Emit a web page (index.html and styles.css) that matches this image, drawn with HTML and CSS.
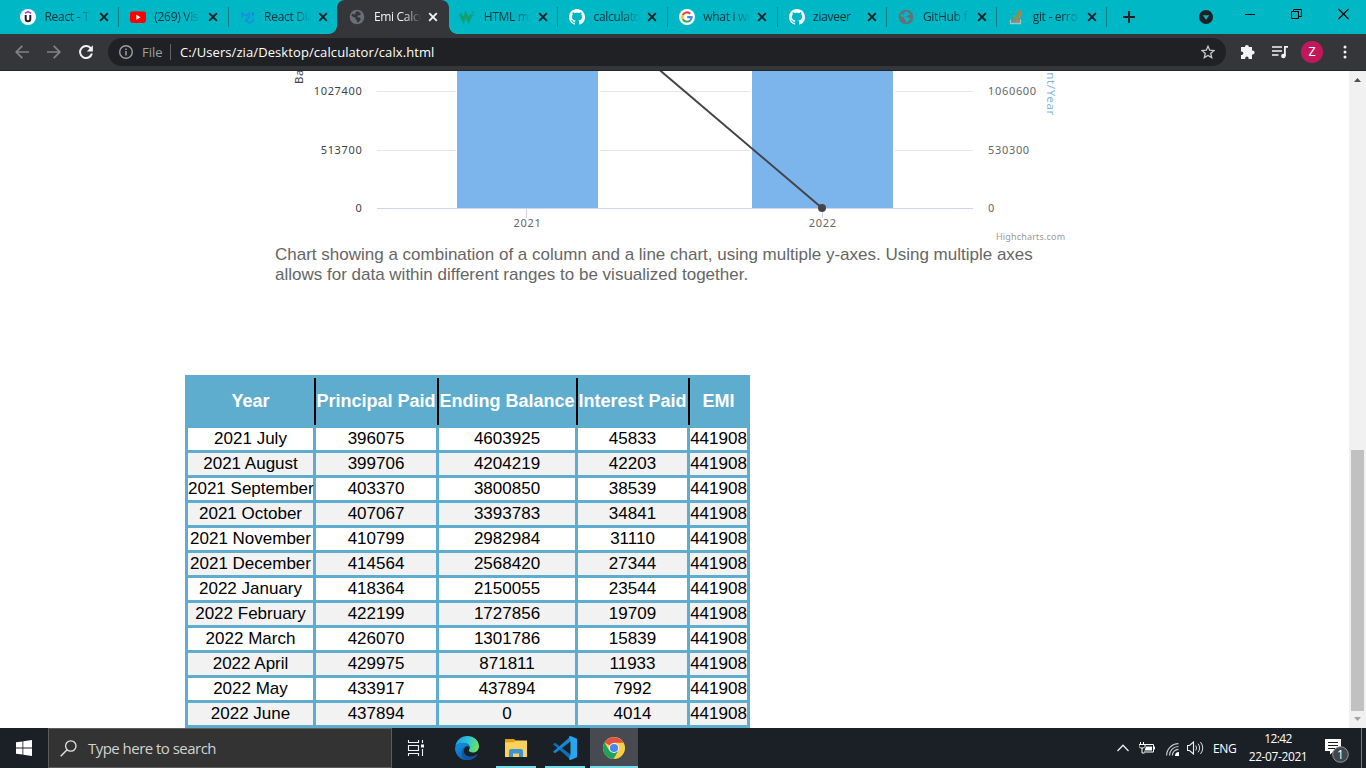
FILE: index.html
```html
<!DOCTYPE html>
<html lang="en">
<head>
<meta charset="utf-8">
<title>Emi Calculator</title>
<link rel="stylesheet" href="styles.css">
</head>
<body>
<svg width="0" height="0" class="defs">
  <defs>
    <symbol id="x" viewBox="0 0 12 12"><path d="M2.2 2.2l7.6 7.6M9.8 2.2l-7.6 7.6" stroke="currentColor" stroke-width="1.9" fill="none"/></symbol>
    <symbol id="github" viewBox="0 0 16 16"><path fill="#fff" d="M8 0C3.58 0 0 3.58 0 8c0 3.54 2.29 6.53 5.47 7.59.4.07.55-.17.55-.38 0-.19-.01-.82-.01-1.49-2.01.37-2.53-.49-2.69-.94-.09-.23-.48-.94-.82-1.13-.28-.15-.68-.52-.01-.53.63-.01 1.08.58 1.23.82.72 1.21 1.87.87 2.33.66.07-.52.28-.87.51-1.07-1.78-.2-3.64-.89-3.64-3.95 0-.87.31-1.59.82-2.15-.08-.2-.36-1.02.08-2.12 0 0 .67-.21 2.2.82.64-.18 1.32-.27 2-.27s1.36.09 2 .27c1.53-1.04 2.2-.82 2.2-.82.44 1.1.16 1.92.08 2.12.51.56.82 1.27.82 2.15 0 3.07-1.87 3.75-3.65 3.95.29.25.54.73.54 1.48 0 1.07-.01 1.93-.01 2.2 0 .21.15.46.55.38A8.01 8.01 0 0 0 16 8c0-4.42-3.58-8-8-8z"/></symbol>
    <symbol id="globe" viewBox="0 0 16 16"><circle cx="8" cy="8" r="7.3" fill="#6b6e73"/><path d="M7.5 2.2L10 2.8l2 2.3-1.2 1.2-2.1.2-.4 1.6 2.4.3 1.2 1.6-1.4 2.2-2.3 1.6-.3-2.4-1.6-1.5.3-1.2-2.4-.6L2.4 6.400l.9-2L5 5.500l1.600-.4-.4-1.300z" fill="var(--land)"/></symbol>
  </defs>
</svg>

<header class="tabs">
  <div class="tab"><svg class="fav" viewBox="0 0 16 16"><circle cx="8" cy="8" r="8" fill="#fff"/><path d="M4.900 4.300L8 2.500 11.100 4.300" fill="none" stroke="#a435f0" stroke-width="1.500"/><path d="M5.700 6v4c0 3 4.600 3 4.600 0V6" fill="none" stroke="#222" stroke-width="2"/></svg><span class="label">React - T</span><svg class="close"><use href="#x"/></svg></div>
  <div class="tab"><svg class="fav" viewBox="0 0 16 16"><rect y="2.500" width="16" height="11.500" rx="2.400" fill="#f00"/><path d="M6.300 5.700v5L10.600 8.200z" fill="#fff"/></svg><span class="label">(269) Vis</span><svg class="close"><use href="#x"/></svg></div>
  <div class="tab before"><svg class="fav" viewBox="0 0 16 16"><path d="M2.200 8.500V4.300L6 6.500l3.500-2.200v4L6.200 10.300v1.700l3.300 1.800 3.500-2V9.300" fill="none" stroke="#1593dc" stroke-width="2"/><path d="M13 3.500v3" stroke="#078bd1" stroke-width="2.200" fill="none"/></svg><span class="label">React Dia</span><svg class="close"><use href="#x"/></svg></div>
  <div class="tab active"><svg class="fav"><use href="#globe"/></svg><span class="label">Emi Calcu</span><svg class="close"><use href="#x"/></svg></div>
  <div class="tab"><svg class="fav" viewBox="0 0 16 16"><path d="M1.200 4.500L4.300 11.500 6.800 5l2.800 6.500L12.200 5.500" fill="none" stroke="#12a070" stroke-width="2.900"/><path d="M12.500 2.800H15L13.700 4.400q1.500.1 1 1.400-.8.9-2.200.3" fill="none" stroke="#12a070"/></svg><span class="label">HTML m</span><svg class="close"><use href="#x"/></svg></div>
  <div class="tab"><svg class="fav"><use href="#github"/></svg><span class="label">calculato</span><svg class="close"><use href="#x"/></svg></div>
  <div class="tab"><svg class="fav" viewBox="0 0 16 16"><circle cx="8" cy="8" r="8" fill="#fff"/><g fill="none" stroke-width="2.100"><path d="M11.200 4.700A4.700 4.700 0 0 0 3.800 6" stroke="#ea4335"/><path d="M3.800 6a4.700 4.700 0 0 0 0 4.100" stroke="#fbbc05"/><path d="M3.800 10.100a4.700 4.700 0 0 0 7.300 1.400" stroke="#34a853"/><path d="M11.100 11.500A4.400 4.400 0 0 0 12.600 8.100H8.200" stroke="#4285f4"/></g></svg><span class="label">what i wo</span><svg class="close"><use href="#x"/></svg></div>
  <div class="tab"><svg class="fav"><use href="#github"/></svg><span class="label whole">ziaveer</span><svg class="close"><use href="#x"/></svg></div>
  <div class="tab"><svg class="fav"><use href="#globe"/></svg><span class="label">GitHub f</span><svg class="close"><use href="#x"/></svg></div>
  <div class="tab"><svg class="fav" viewBox="0 0 16 16"><path d="M2.500 10.500v4h10v-4" fill="none" stroke="#bcbbbb" stroke-width="1.300"/><path d="M4.300 12.500h6.500M4.600 10l6.200 1.200M5.400 7.300l5.800 2.700M7 4.500l4.900 4.100M9.300 2.300l3.500 5.200M12.200 1.500l1.200 5" stroke="#e07a1c" stroke-width="1.200"/></svg><span class="label">git - erro</span><svg class="close"><use href="#x"/></svg></div>
  <svg class="newtab" viewBox="0 0 12 12"><path d="M6 0v12M0 6h12" stroke="#202124" stroke-width="2"/></svg>
  <div class="controls">
    <svg width="14" height="14" viewBox="0 0 14 14"><circle cx="7" cy="7" r="7" fill="#202124"/><path d="M3.800 5.200h6.400L7 9.800z" fill="#00b7c6"/></svg>
    <svg class="win" width="10" height="12" viewBox="0 0 10 12"><path d="M0 6.500h10" stroke="#000"/></svg>
    <svg class="win" width="11" height="12" viewBox="0 0 11 12"><path d="M.5 3.500h7v7h-7zM2.500 3V1.500h8v7H8" fill="none" stroke="#000"/></svg>
    <svg class="win" width="11" height="12" viewBox="0 0 11 12"><path d="M.5 1l10 10M10.500 1l-10 10" stroke="#000" stroke-width="1.100"/></svg>
  </div>
</header>

<nav class="toolbar">
  <div class="nav">
    <svg width="14" height="14" viewBox="0 0 14 14"><path d="M14 7H1.500M7.300.8L1.200 7l6.100 6.200" fill="none" stroke="#818387" stroke-width="1.700"/></svg>
    <svg width="14" height="14" viewBox="0 0 14 14"><path d="M0 7h12.500M6.700.8L12.800 7l-6.100 6.200" fill="none" stroke="#818387" stroke-width="1.700"/></svg>
    <svg width="14" height="14" viewBox="0 0 14 14"><path d="M12 3.600A6 6 0 1 0 12.900 8.500" fill="none" stroke="#f1f3f4" stroke-width="2"/><path d="M13.900.3v6.100H7.800z" fill="#f1f3f4"/></svg>
  </div>
  <div class="omnibox">
    <svg width="14" height="14" viewBox="0 0 14 14"><circle cx="7" cy="7" r="6.300" fill="none" stroke="#9aa0a6" stroke-width="1.400"/><path d="M7 6v4.500M7 3.400v1.500" stroke="#9aa0a6" stroke-width="1.500"/></svg>
    <span class="scheme">File</span><span class="url">C:/Users/zia/Desktop/calculator/calx.html</span>
    <svg class="star" width="14" height="14" viewBox="0 0 14 14"><path d="M7 1.200l1.700 4 4.300.4-3.300 2.800 1 4.200L7 10.400l-3.700 2.200 1-4.200L1 5.600l4.300-.4z" fill="none" stroke="#c6c9cc" stroke-width="1.300"/></svg>
  </div>
  <div class="actions">
    <svg width="15" height="15" viewBox="0 0 15 15"><path d="M5 3h-.1a2 2 0 0 1 4 0H12v3.500h.6a2 2 0 0 1 0 4H12V15H8.600v-.7a1.700 1.700 0 0 0-3.400 0v.7H1v-4h.6a1.700 1.700 0 0 0 0-3.500H1V3z" fill="#f1f3f4"/></svg>
    <svg width="17" height="14" viewBox="0 0 17 14"><path d="M0 2h10M0 6h10M0 10h6.500" stroke="#f1f3f4" stroke-width="1.600"/><path d="M12.900 11V1.800H16" fill="none" stroke="#f1f3f4" stroke-width="1.800"/><circle cx="11.400" cy="11" r="2.300" fill="#f1f3f4"/></svg>
    <span class="avatar">Z</span>
    <svg width="4" height="14" viewBox="0 0 4 14"><g fill="#f1f3f4"><circle cx="2" cy="2" r="1.500"/><circle cx="2" cy="7" r="1.500"/><circle cx="2" cy="12" r="1.500"/></g></svg>
  </div>
</nav>

<div class="viewport">
  <main class="page">
    <figure class="figure">
      <svg class="chart" width="800" height="173" viewBox="275 71 800 173">
        <path d="M377 91.500H456M600 91.500H750.500M895 91.500H973M377 150.500H456M600 150.500H750.500M895 150.500H973" stroke="#e6e6e6"/>
        <rect x="457" y="71" width="141" height="137" fill="#7cb5ec"/>
        <rect x="752" y="71" width="141" height="137" fill="#7cb5ec"/>
        <path d="M377 208.500H973M526.500 208v10M822.500 208v10" stroke="#ccd6eb" fill="none"/>
        <path d="M659 69.500L822 208" stroke="#434348" stroke-width="2"/>
        <circle cx="822" cy="208" r="4" fill="#434348"/>
        <g class="axis dark" text-anchor="end"><text x="362.500" y="95">1027400</text><text x="362.500" y="154">513700</text><text x="362.500" y="212">0</text></g>
        <g class="axis"><text x="988" y="95">1060600</text><text x="988" y="154">530300</text><text x="988" y="212">0</text></g>
        <g class="axis" text-anchor="middle"><text x="527.500" y="227">2021</text><text x="822.800" y="227">2022</text></g>
        <text class="title dark" transform="translate(303 84) rotate(-90)">Ba</text>
        <text class="title blue" text-anchor="end" transform="translate(1047 116) rotate(90)">nt/Year</text>
        <text class="credit" x="996" y="240">Highcharts.com</text>
      </svg>
      <figcaption class="caption">Chart showing a combination of a column and a line chart, using multiple y-axes. Using multiple axes<br>allows for data within different ranges to be visualized together.</figcaption>
    </figure>
    <table class="schedule">
      <colgroup><col class="c1"><col class="c2"><col class="c3"><col class="c4"><col class="c5"></colgroup>
      <thead><tr><th>Year</th><th>Principal Paid</th><th>Ending Balance</th><th>Interest Paid</th><th>EMI</th></tr></thead>
      <tbody>
        <tr><td>2021 July</td><td>396075</td><td>4603925</td><td>45833</td><td>441908</td></tr>
        <tr><td>2021 August</td><td>399706</td><td>4204219</td><td>42203</td><td>441908</td></tr>
        <tr><td>2021 September</td><td>403370</td><td>3800850</td><td>38539</td><td>441908</td></tr>
        <tr><td>2021 October</td><td>407067</td><td>3393783</td><td>34841</td><td>441908</td></tr>
        <tr><td>2021 November</td><td>410799</td><td>2982984</td><td>31110</td><td>441908</td></tr>
        <tr><td>2021 December</td><td>414564</td><td>2568420</td><td>27344</td><td>441908</td></tr>
        <tr><td>2022 January</td><td>418364</td><td>2150055</td><td>23544</td><td>441908</td></tr>
        <tr><td>2022 February</td><td>422199</td><td>1727856</td><td>19709</td><td>441908</td></tr>
        <tr><td>2022 March</td><td>426070</td><td>1301786</td><td>15839</td><td>441908</td></tr>
        <tr><td>2022 April</td><td>429975</td><td>871811</td><td>11933</td><td>441908</td></tr>
        <tr><td>2022 May</td><td>433917</td><td>437894</td><td>7992</td><td>441908</td></tr>
        <tr><td>2022 June</td><td>437894</td><td>0</td><td>4014</td><td>441908</td></tr>
      </tbody>
    </table>
  </main>
  <aside class="scrollbar">
    <svg width="17" height="17" viewBox="0 0 17 17"><path d="M5 11h7L8.500 7z" fill="#505050"/></svg>
    <div class="thumb"></div>
    <svg width="17" height="17" viewBox="0 0 17 17"><path d="M5 6h7L8.500 10z" fill="#a3a3a3"/></svg>
  </aside>
</div>

<footer class="taskbar">
  <div class="start"><svg width="16" height="16" viewBox="0 0 16 16"><path d="M0 2.300L6.500 1.400V7.600H0zM7.300 1.200L16 0v7.600H7.300zM0 8.400h6.500v6.200L0 13.700zM7.300 8.400H16V16l-8.700-1.200z" fill="#fff"/></svg></div>
  <div class="search"><svg width="17" height="17" viewBox="0 0 17 17"><circle cx="10.800" cy="6" r="5.200" fill="none" stroke="#e4e4e4" stroke-width="1.300"/><path d="M7.100 9.700L.7 16.200" stroke="#e4e4e4" stroke-width="1.400"/></svg><span>Type here to search</span></div>
  <div class="apps">
    <div class="app taskview"><svg width="18" height="16" viewBox="0 0 18 16"><path d="M1.500 0v2.500h10V0M1.500 16v-2.500h10V16M1.500 5.500h10v5h-10zM15.500 0v3M15.500 9v7" fill="none" stroke="#f2f2f2" stroke-width="1.100"/><path d="M14 4.500h3v3h-3z" fill="#fff"/></svg></div>
    <div class="app edge"><svg width="24" height="24" viewBox="0 0 24 24">
      <defs><linearGradient id="ea" x1="0" y1=".3" x2="1" y2=".5"><stop stop-color="#1b9fe4"/><stop offset=".5" stop-color="#2cc3d8"/><stop offset="1" stop-color="#6be45b"/></linearGradient><linearGradient id="eb" x1="0" y1="0" x2=".6" y2="1"><stop stop-color="#1596e0"/><stop offset="1" stop-color="#0762b9"/></linearGradient></defs>
      <path d="M.3 10.500C1.200 4.300 6 0 12.300 0 19 0 24 4.700 24 10.200c0 3.600-2.500 6.300-6 6.300-2.800 0-4.200-1.200-4.200-2 0-.7.900-1.200.9-3C14.700 9 12 7 8.500 7 4 7 1.200 9 .3 10.500z" fill="url(#ea)"/>
      <path d="M.2 11C1.500 8.300 5 6.700 8.500 6.700c3.500 0 6.200 2.100 6.200 4.400-2.300-2.200-6.500.2-6 4.500.4 3.800 3.500 6.800 7.300 8A12 12 0 0 1 0 12z" fill="url(#eb)"/>
      <path d="M10.700 10.400c-3.800 3-2 9.500 4.300 10 3.500.2 5.300-1 7-2.100.4-.2.700.1.400.6-2.200 3.400-5.600 5.100-9.500 5.100-4.800-.8-6.500-4.700-6-8 .3-2.600 1.500-4.700 3.800-5.600z" fill="#15539e"/>
    </svg></div>
    <div class="app running explorer"><svg width="22" height="18" viewBox="0 0 22 18"><path d="M0 0h8.500l2 1.500H22V18H0z" fill="#fbd15b"/><path d="M0 0h8.500l2 1.500-1.500 1.700H0z" fill="#e3a008"/><path d="M4 18v-6.500L5.500 10h11l1.500 1.500V18h-4v-3.500H8V18z" fill="#3b92d4"/></svg></div>
    <div class="app running"><svg width="24" height="24" viewBox="0 0 24 24"><path d="M0 8.300L2 6.700 17.500 18.500v5z" fill="#0a70bd"/><path d="M0 15.700l2 1.600L17.500 5.500v-5z" fill="#1687cf"/><path d="M17.500 0L24 2.700v18.600L17.500 24l-1.700-.8 1.700-5V5.800L15.800.8z" fill="#27a5ee"/></svg></div>
    <div class="app running current"><svg width="22" height="22" viewBox="0 0 22 22"><circle cx="11" cy="11" r="11" fill="#fdce45"/><path d="M11 11L1.500 5.500A11 11 0 0 1 20.500 5.800H11z" fill="#df5045"/><path d="M1.500 5.500A11 11 0 0 0 10.500 22l5-8.500L11 11 6.400 13.800z" fill="#1ca15f"/><circle cx="11" cy="11" r="5.100" fill="#f5f5f5"/><circle cx="11" cy="11" r="4.100" fill="#4688f1"/></svg></div>
  </div>
  <div class="tray">
    <svg width="12" height="8" viewBox="0 0 12 8"><path d="M.5 7L6 1.300 11.500 7" fill="none" stroke="#eee" stroke-width="1.300"/></svg>
    <svg class="battery" width="16" height="12" viewBox="0 0 16 12"><path d="M5 2.500h9.500v7.500H5M15.500 4.500v3" fill="none" stroke="#fff"/><path d="M7 4.500h6v4H5.500z" fill="#fff"/><path d="M1.500 0v2.500M4.500 0v2.500M0 2.500h6v2L4.500 6h-3L0 4.500zM3 6v5h2.500" fill="none" stroke="#fff"/></svg>
    <svg class="wifi" width="13" height="13" viewBox="0 0 13 13"><g fill="none" stroke="#c9c9c9" stroke-width="1.200"><path d="M.6 12.500A12 12 0 0 1 12.500.6M3.500 12.500a9 9 0 0 1 9-9M6.400 12.500a6 6 0 0 1 6.100-6.100"/></g><path d="M9 13a4 4 0 0 1 4-4v4z" fill="#fff"/></svg>
    <svg class="volume" width="17" height="14" viewBox="0 0 17 14"><path d="M.5 4.500h2L6.500 1v12l-4-3.500h-2z" fill="none" stroke="#eee" stroke-width="1.100"/><path d="M8.700 4.500q1.800 2.500 0 5M11 2.700q3.300 4.300 0 8.600M13.500 1q4.500 6 0 12" fill="none" stroke="#ddd"/></svg>
    <span class="lang">ENG</span>
    <div class="clock"><span>12:42</span><span class="date">22-07-2021</span></div>
    <div class="notice"><svg width="24" height="26" viewBox="0 0 24 26"><path d="M0 1h16v12H9l-4 3.500V13H0z" fill="#fff"/><path d="M3 4.500h10M3 7.500h10M3 10.500h7" stroke="#1b1e24"/><circle cx="15.500" cy="16.500" r="7.800" fill="#44474a" stroke="#96989a"/><text x="15.500" y="21" text-anchor="middle">1</text></svg></div>
    <div class="peek"></div>
  </div>
</footer>
</body>
</html>
```
FILE: styles.css
```css
* { box-sizing: border-box; }
html, body { margin: 0; height: 100%; overflow: hidden; }
body { display: flex; flex-direction: column; width: 1366px; height: 768px; background: #fff; font-family: "Open Sans", "Noto Sans", sans-serif; }
svg { display: block; flex: none; }
.defs { display: none; }

.tabs { display: flex; height: 34px; padding-left: 9px; background: #00b7c6; flex: none; --land: #00b7c6; }
.tab { position: relative; display: flex; align-items: center; width: 109.8px; height: 34px; padding-left: 11px; flex: none; color: #12343a; }
.tab::after { content: ""; position: absolute; right: 0; top: 7px; width: 1px; height: 20px; background: #147c86; }
.tab.before::after { display: none; }
.fav { width: 16px; height: 16px; }
.label { width: 48px; margin-left: 8.5px; white-space: nowrap; font-size: 12px; letter-spacing: -0.3px; line-height: 18px; -webkit-mask-image: linear-gradient(90deg, #000 62%, transparent 98%); mask-image: linear-gradient(90deg, #000 62%, transparent 98%); }
.label.whole { -webkit-mask-image: none; mask-image: none; }
.close { width: 12px; height: 12px; margin-left: 5px; color: #202124; }
.tab.active { color: #f1f3f4; --land: #35363a; }
.tab.active .close { color: #f1f3f4; }
.tab.active::before { content: ""; position: absolute; z-index: 0; left: -1px; right: -1px; top: 0; bottom: 0; background: #35363a; border-radius: 8px 8px 0 0; }
.tab.active::after { left: -9px; right: -9px; top: auto; bottom: 0; width: auto; height: 8px; background: radial-gradient(circle at 0 0, transparent 7.5px, #35363a 8px) left / 8px 8px no-repeat, radial-gradient(circle at 100% 0, transparent 7.5px, #35363a 8px) right / 8px 8px no-repeat; }
.tab.active > * { position: relative; z-index: 1; }
.newtab { width: 12px; height: 12px; margin: 11px 0 0 16px; }
.controls { display: flex; align-items: center; margin-left: auto; padding-right: 17px; height: 34px; }
.win { margin-top: -6px; margin-left: 36px; }
.win:nth-child(2) { margin-left: 32px; }

.toolbar { display: flex; align-items: center; height: 37px; flex: none; padding-bottom: 1px; background: #35363a; border-bottom: 1px solid #252629; }
.nav { display: flex; width: 108px; padding-left: 15px; gap: 18px; }
.omnibox { display: flex; align-items: center; width: 1118px; height: 28px; padding: 0 11px; border-radius: 14px; background: #202124; font-size: 13px; }
.scheme { width: 29px; height: 16px; margin-left: 9px; line-height: 16px; color: #9aa0a6; border-right: 1px solid #606367; }
.url { margin-left: 9px; color: #fff; letter-spacing: 0.09px; line-height: 16px; }
.star { margin-left: auto; }
.actions { display: flex; align-items: center; padding-left: 14px; }
.actions svg:nth-child(2) { margin-left: 17px; }
.avatar { width: 22px; height: 22px; margin: 0 20px 0 12px; border-radius: 50%; background: #c2185b; color: #fff; text-align: center; font: 12px/22px Roboto, sans-serif; }

.viewport { display: flex; height: 657px; flex: none; }
.page { flex: 1; overflow: hidden; font-family: "Liberation Sans", Arial, sans-serif; }
.figure { margin: 0 0 0 275px; width: 800px; }
.chart { font-family: "Noto Sans", "Open Sans", sans-serif; overflow: visible; }
.axis { font-size: 11px; letter-spacing: .68px; fill: #666; }
.dark, .axis.dark { fill: #434348; }
.title { font-size: 11.500px; letter-spacing: .65px; }
.blue { fill: #7cb5ec; }
.credit { font-size: 9px; letter-spacing: .17px; fill: #999; }
.caption { margin-top: 1px; height: 40px; color: #666; font-size: 17px; line-height: 20px; white-space: nowrap; }
.schedule { width: 565px; margin: 90px 0 0 185px; table-layout: fixed; border-collapse: separate; border-spacing: 3px; background: #5eadce; font-size: 17px; color: #000; text-align: center; }
.c1 { width: 125px; } .c2 { width: 120px; } .c3 { width: 136px; } .c4 { width: 109px; } .c5 { width: 57px; }
.schedule th, .schedule td { padding: 0; white-space: nowrap; }
.schedule th { height: 47px; color: #fff; font-size: 18px; }
.schedule th + th { box-shadow: -2px 0 0 #000; }
.schedule td { height: 22px; line-height: 22px; background: #fff; }
.schedule tbody tr:nth-child(even) td { background: #f2f2f2; }
.scrollbar { display: flex; flex-direction: column; width: 17px; background: #f1f1f1; }
.thumb { width: 13px; height: 261px; margin: auto 2px 0; background: #c1c1c1; }

.taskbar { display: flex; height: 40px; flex: none; background: #1b1f26; color: #fff; }
.start { display: flex; align-items: center; justify-content: center; width: 48px; }
.search { display: flex; align-items: center; width: 344px; padding-left: 11px; border: 1px solid #5c5c5c; background: #333; color: #d2d2d2; font-size: 15px; letter-spacing: -.53px; }
.search span { margin-left: 11px; }
.apps { display: flex; }
.app { display: flex; align-items: center; justify-content: center; width: 40px; height: 40px; margin-right: 9px; }
.taskview { width: 48px; margin-right: 7px; }
.running { border-bottom: 2px solid #76dbe8; padding-top: 2px; }
.explorer { margin-left: 0; }
.current { width: 48px; margin: 0 0 0 -4px; background: #474b51; }
.tray { display: flex; align-items: center; margin-left: auto; }
.battery { margin-left: 10px; }
.wifi { margin-left: 11px; margin-top: 2px; }
.volume { margin-left: 8px; }
.lang { width: 34px; margin-left: 9px; font-size: 12px; letter-spacing: -.3px; }
.clock { display: flex; flex-direction: column; align-items: center; width: 62px; font-size: 12px; line-height: 18px; letter-spacing: -.6px; }
.date { letter-spacing: -.4px; }
.notice { margin-left: 16px; width: 36px; font: 12px "Open Sans", sans-serif; }
.notice svg { margin-top: 6px; }
.notice text { fill: #fff; }
.peek { width: 5px; height: 40px; border-left: 1px solid #74777a; }
```
